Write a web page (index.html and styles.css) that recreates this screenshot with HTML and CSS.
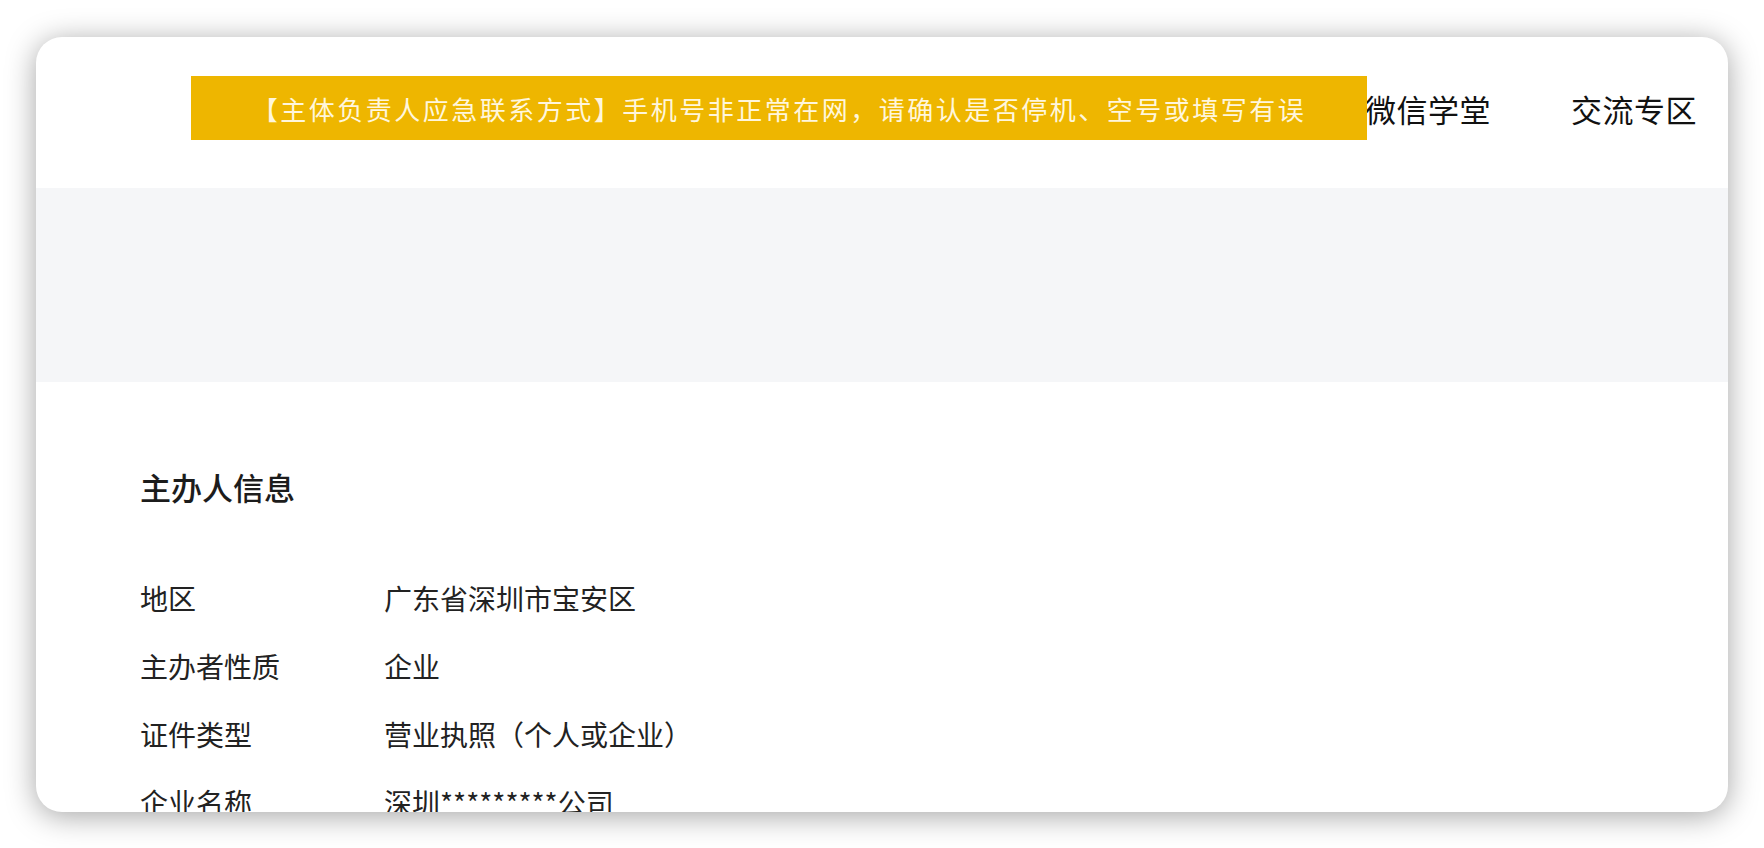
FILE: index.html
```html
<!DOCTYPE html>
<html lang="zh-CN">
<head>
    <meta charset="UTF-8">
    <meta name="viewport" content="width=device-width, initial-scale=1.0">
    <title>主办人信息</title>
    <link rel="stylesheet" href="styles.css">
</head>
<body>
    <div id="page">
        <div id="card">
            <div id="header">
                <div id="toast">【主体负责人应急联系方式】手机号非正常在网，请确认是否停机、空号或填写有误</div>
                <nav id="nav">
                    <a class="nav-item">微信学堂</a>
                    <a class="nav-item">交流专区</a>
                </nav>
            </div>
            <div id="banner"></div>
            <div id="info">
                <h2 class="info-title">主办人信息</h2>
                <div class="info-row">
                    <span class="info-label">地区</span>
                    <span class="info-value">广东省深圳市宝安区</span>
                </div>
                <div class="info-row">
                    <span class="info-label">主办者性质</span>
                    <span class="info-value">企业</span>
                </div>
                <div class="info-row">
                    <span class="info-label">证件类型</span>
                    <span class="info-value">营业执照（个人或企业）</span>
                </div>
                <div class="info-row">
                    <span class="info-label">企业名称</span>
                    <span class="info-value">深圳*********公司</span>
                </div>
            </div>
        </div>
    </div>
</body>
</html>
```

FILE: styles.css
```css
body {
    font-family: "Noto Sans CJK SC", "Noto Sans", sans-serif;
    margin: 0;
    padding: 0;
    background-color: #fff;
    color: #222;
}
#page {
    padding: 37px 36px 36px 36px;
}
#card {
    height: 775px;
    background: #fff;
    border-radius: 26px;
    overflow: hidden;
    box-shadow: 0 4px 30px rgba(0, 0, 0, 0.36);
}
#header {
    position: relative;
    height: 151px;
    display: flex;
    align-items: center;
    justify-content: flex-end;
    padding-right: 31px;
}
#nav {
    display: flex;
    gap: 80px;
    margin-top: -8px;
}
.nav-item {
    font-size: 31px;
    letter-spacing: 0.5px;
    color: #111;
    text-decoration: none;
}
#toast {
    position: absolute;
    left: 155px;
    top: 39px;
    width: 1176px;
    height: 64px;
    display: flex;
    align-items: center;
    justify-content: center;
    background: #eeb600;
    color: #fff6dc;
    font-size: 26px;
    letter-spacing: 2.5px;
    z-index: 2;
}
#banner {
    height: 194px;
    background: #f5f6f8;
}
#info {
    padding: 85px 104px 0 104px;
}
.info-title {
    margin: 0 0 57px 0;
    font-size: 31px;
    line-height: 40px;
    font-weight: 500;
    color: #1c1c1c;
}
.info-row {
    display: flex;
    height: 68px;
    align-items: center;
    font-size: 28px;
}
.info-label {
    width: 244px;
    color: #222;
}
.info-value {
    color: #222;
}
```
